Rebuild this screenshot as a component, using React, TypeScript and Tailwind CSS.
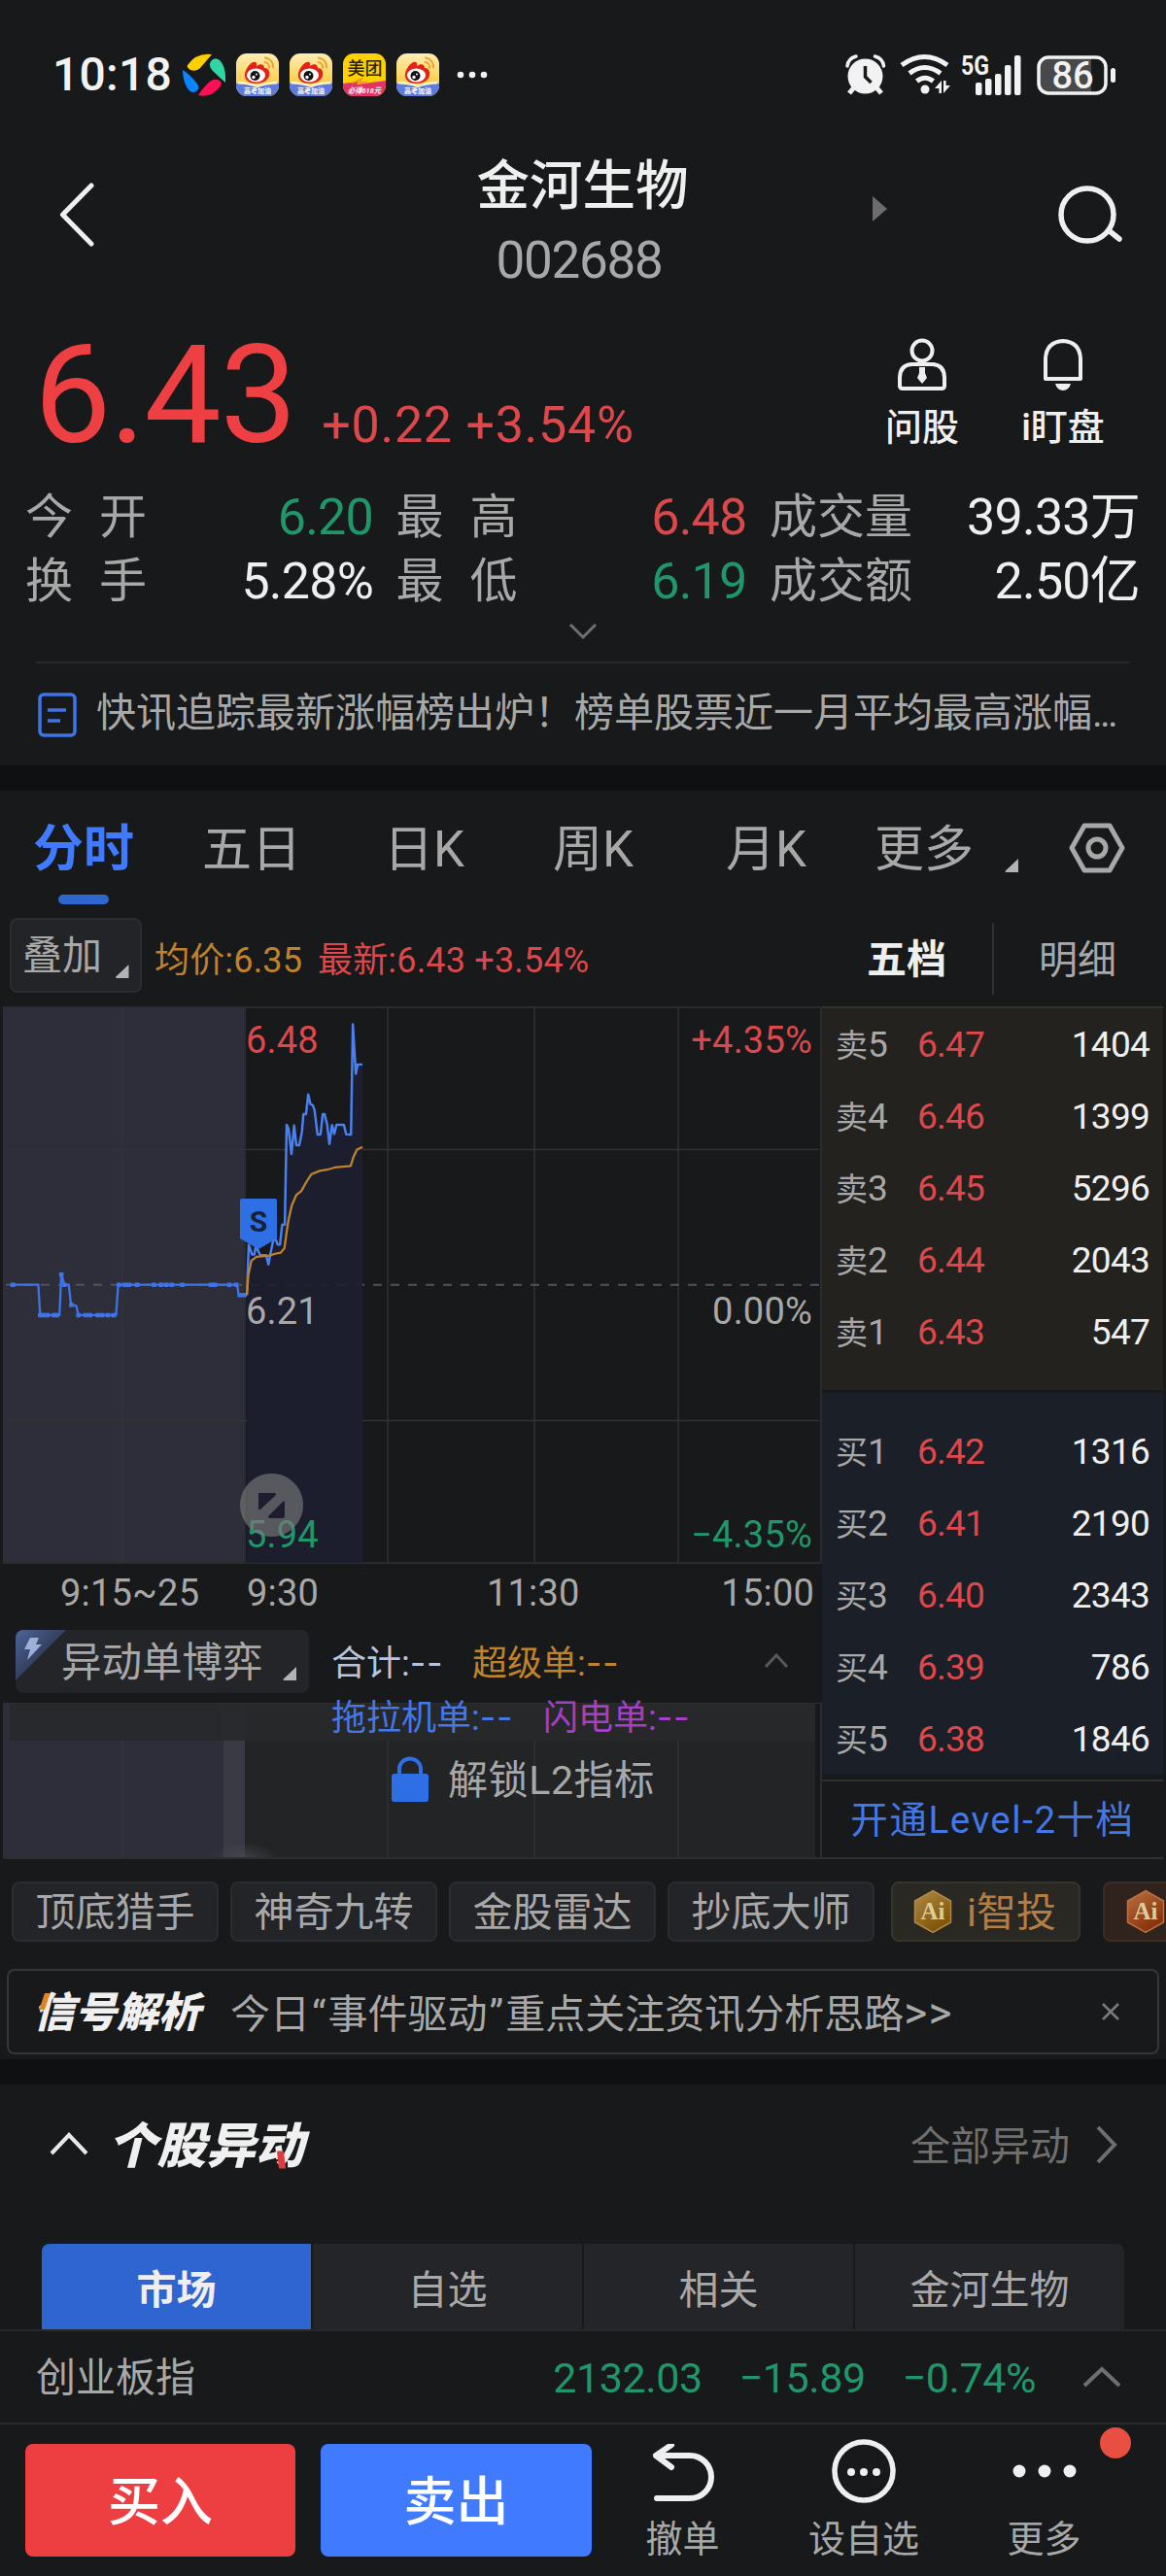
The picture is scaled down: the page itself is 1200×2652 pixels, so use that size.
const CJK = "font-[Roboto,'Noto_Sans_CJK_SC',sans-serif]";

const stats = [
  [
    { label: ["今", "开"], value: "6.20", color: "text-[#20976a]" },
    { label: ["最", "高"], value: "6.48", color: "text-[#d9484b]" },
    { label: ["成", "交", "量"], value: "39.33万", color: "text-[#efefef]" },
  ],
  [
    { label: ["换", "手"], value: "5.28%", color: "text-[#efefef]" },
    { label: ["最", "低"], value: "6.19", color: "text-[#20976a]" },
    { label: ["成", "交", "额"], value: "2.50亿", color: "text-[#efefef]" },
  ],
];

const sells = [
  { name: "卖5", price: "6.47", qty: "1404" },
  { name: "卖4", price: "6.46", qty: "1399" },
  { name: "卖3", price: "6.45", qty: "5296" },
  { name: "卖2", price: "6.44", qty: "2043" },
  { name: "卖1", price: "6.43", qty: "547" },
];

const buys = [
  { name: "买1", price: "6.42", qty: "1316" },
  { name: "买2", price: "6.41", qty: "2190" },
  { name: "买3", price: "6.40", qty: "2343" },
  { name: "买4", price: "6.39", qty: "786" },
  { name: "买5", price: "6.38", qty: "1846" },
];

const tools = ["顶底猎手", "神奇九转", "金股雷达", "抄底大师"];

const auctionLine =
  "27,778 103,778 108,861 160,861 165,748 173,778 185,778 191,833 205,835 211,861 312,861 318,778 638,778 642,806 664,806";
const priceLine =
  "664,806 669,668 678,695 684,695 688,672 700,697 716,697 722,722 728,690 735,655 742,655 747,668 753,668 759,613 766,613 771,340 776,350 784,420 791,342 797,396 805,396 812,360 816,311 823,311 829,257 835,284 841,286 846,300 854,367 862,367 868,311 873,311 880,340 886,393 893,341 899,365 905,340 925,340 931,366 944,367 949,65 957,201 962,175 975,175";
const averageLine =
  "664,806 668,750 676,712 690,701 725,698 740,693 755,690 765,678 770,640 776,600 785,560 797,532 810,522 825,495 838,475 860,466 880,463 900,457 943,453 950,430 960,408 975,401";

/* small marks on the auction line, one per matched tick */
const ticks = [
  [35, 778], [108, 861], [117, 861], [128, 861], [145, 861], [153, 861], [165, 750], [173, 778],
  [192, 833], [211, 861], [230, 861], [242, 861], [263, 861], [275, 861], [290, 861], [305, 861],
  [320, 778], [336, 778], [347, 778], [369, 778], [414, 778], [433, 778], [447, 778], [462, 778],
  [490, 778], [567, 778], [578, 778], [617, 778], [635, 778], [645, 806], [657, 806],
];

const Corner = ({ className }: { className: string }) => (
  <svg viewBox="0 0 14 14" className={className}>
    <path d="M14 0v14H1.5Q0 14 .8 12.6Z" fill="#b3b3b3" />
  </svg>
);

const WeiboIcon = () => (
  <svg viewBox="0 0 44 44" className="h-11 w-11">
    <defs>
      <linearGradient id="wb" x1="0" y1="0" x2="0" y2="1">
        <stop offset="0" stopColor="#fdeeb5" />
        <stop offset="0.65" stopColor="#fdd04f" />
      </linearGradient>
      <clipPath id="wbClip">
        <rect width="44" height="44" rx="11" />
      </clipPath>
    </defs>
    <g clipPath="url(#wbClip)">
      <rect width="44" height="44" fill="url(#wb)" />
      <path d="M0 31q11-2 22 2q11-4 22-2v13H0z" fill="#5d7be0" />
      <path d="M2 29q11 0 20 3.500q9-3.500 20-3.500v2.500q-11 0-20 3.500q-9-3.500-20-3.500z" fill="#fff3d0" />
      <path d="M9 21C10 14 17 7 20 9c2 1 1 3 1 4c4-3 8-2 8 2c4 0 6 3 5 8c-1 5-7 8-14 8S8 27 9 21Z" fill="#e2231a" />
      <ellipse cx="20.500" cy="22.500" rx="9.500" ry="7" fill="#fff" />
      <circle cx="19.500" cy="23" r="5" fill="#111" />
      <circle cx="18" cy="24.500" r="1.700" fill="#fff" />
      <circle cx="21" cy="21.500" r="1" fill="#fff" />
      <path d="M30 4.500a9 9 0 0 1 8 10M29.500 9a5 5 0 0 1 4.500 6" stroke="#eda52f" strokeWidth="2" fill="none" strokeLinecap="round" />
      <text x="22" y="41" fontSize="7" fontWeight="700" fill="#fff" textAnchor="middle">
        高考加油
      </text>
    </g>
  </svg>
);

const MeituanIcon = () => (
  <svg viewBox="0 0 44 44" className="h-11 w-11">
    <clipPath id="mtClip">
      <rect width="44" height="44" rx="11" />
    </clipPath>
    <g clipPath="url(#mtClip)">
      <rect width="44" height="44" fill="#ffd100" />
      <path d="M0 31l16-2l-2 3l30-4v16H0z" fill="#e23468" />
      <path d="M9 31l10-5l-2 4l8-1" stroke="#f08a1c" strokeWidth="1.200" fill="none" />
      <text x="22.500" y="21.500" fontSize="18" fontWeight="500" fill="#2b2300" textAnchor="middle">
        美团
      </text>
      <text x="5" y="41" fontSize="8" fontWeight="700" fontStyle="italic" fill="#fff" textLength="34" lengthAdjust="spacingAndGlyphs">
        必得618元
      </text>
    </g>
  </svg>
);

const StatusBar = () => (
  <div className="flex h-[154px] items-center pl-[54px] pr-[50px] text-[#f2f2f2]">
    <span className="w-[119px] text-[48px] leading-none font-medium tracking-[0.005em]">10:18</span>
    <div className="ml-[15px] flex gap-[11px]">
      <svg viewBox="0 0 44 44" className="h-11 w-11">
        <path d="M5 12Q14-1 30 1Q24 8 18 15Q14 19 8 17Q4 15 5 12Z" fill="#ffd000" />
        <path d="M29 8Q33 3 38 7Q45 14 44 30Q37 24 31 18Q26 13 29 8Z" fill="#2fd6a4" />
        <path d="M0 17Q7 21 14 30Q19 36 14 39Q9 42 5 36Q0 28 0 17Z" fill="#0a84ff" />
        <path d="M16 43Q22 34 28 29Q33 25 38 28Q42 31 37 36Q28 46 16 43Z" fill="#ff0f56" />
      </svg>
      <WeiboIcon />
      <WeiboIcon />
      <MeituanIcon />
      <WeiboIcon />
    </div>
    <svg viewBox="0 0 32 8" className="ml-[18px] h-2 w-8" fill="#f2f2f2">
      <circle cx="4" cy="4" r="3.300" />
      <circle cx="16" cy="4" r="3.300" />
      <circle cx="28" cy="4" r="3.300" />
    </svg>
    <svg viewBox="0 -10 280 64" className="ml-auto h-16 w-[280px]" fill="#f2f2f2">
      <circle cx="20.500" cy="23.500" r="18" />
      <path d="M2 13q1-8 9-10M39.500 13q-1-8-9-10" stroke="#f2f2f2" strokeWidth="3.500" fill="none" strokeLinecap="round" />
      <path d="M9 35l-5 6M32 35l5 6" stroke="#f2f2f2" strokeWidth="5" />
      <path d="M20.500 13v11l6 6" stroke="#17191a" strokeWidth="3.500" fill="none" />
      <path d="M58 12q23.500-17 47 0M66 20.500q15.500-12 32 0M73.500 28.500q8.500-6.500 17 0" stroke="#f2f2f2" strokeWidth="5" fill="none" />
      <circle cx="82" cy="37" r="4.500" />
      <path d="M92 36l7-8v13h-2.600v-5zM108 33l-7 8V28h2.600v5z" />
      <text x="119" y="22" fontSize="28" fontWeight="700" textLength="29" lengthAdjust="spacingAndGlyphs">
        5G
      </text>
      <rect x="134" y="30" width="6.500" height="13" rx="2" />
      <rect x="144" y="26" width="6.500" height="17" rx="2" />
      <rect x="154" y="21" width="6.500" height="22" rx="2" />
      <rect x="164" y="12" width="6.500" height="31" rx="2" />
      <rect x="174" y="2" width="6.500" height="41" rx="2" />
      <path d="M208 5h45v35h-45q-9 0-9-9V14q0-9 9-9z" fill="#48494b" />
      <rect x="199" y="4" width="69" height="37" rx="10" fill="none" stroke="#f2f2f2" strokeWidth="3.500" />
      <rect x="273" y="15" width="5" height="15" rx="2.500" />
      <text x="234" y="36" fontSize="38" fontWeight="500" textAnchor="middle">
        86
      </text>
    </svg>
  </div>
);

const TitleBar = () => (
  <div className="flex h-[156px] items-start justify-between pl-[60px] pr-[44px]">
    <svg viewBox="0 0 38 66" className="mt-[34px] h-[66px] w-[38px]" fill="none" stroke="#efefef" strokeWidth="5" strokeLinecap="round" strokeLinejoin="round">
      <path d="M34 3L4.500 33L34 63" />
    </svg>
    <div className="relative ml-[13px] flex w-[320px] flex-col items-center">
      <h1 className="h-[70px] pt-[3px] text-[54.5px] leading-[69px] font-medium text-[#efefef]">金河生物</h1>
      <span className="mt-[11px] mr-[7px] text-[53px] leading-[66px] tracking-[-0.025em] text-[#a8a8a8]">002688</span>
      <svg viewBox="0 0 15 26" className="absolute top-[48px] left-[458px] h-[26px] w-[15px]">
        <path d="M0 0L15 13L0 26Z" fill="#6c6c6c" />
      </svg>
    </div>
    <svg viewBox="0 0 68 64" className="mt-[35px] h-[64px] w-[68px]" fill="none" stroke="#efefef" strokeWidth="5.500" strokeLinecap="round">
      <circle cx="31" cy="32" r="27" />
      <path d="M54 49L64 57" />
    </svg>
  </div>
);

const PriceRow = () => (
  <div className="flex h-[188px] pl-[35px]">
    <div className="flex w-[840px] items-baseline">
      <span className="text-[141px] leading-[194px] tracking-[-0.01em] text-[#ee3f43]">6.43</span>
      <span className="ml-[27px] text-[52px] leading-none tracking-[0.014em] text-[#dc484b]">+0.22 +3.54%</span>
    </div>
    <div className="mt-[38px] flex h-[112px] w-[148px] flex-col items-center text-[38px] leading-[44px] font-medium text-[#efefef]">
      <svg viewBox="0 0 52 56" className="mb-[14px] h-[56px] w-[52px] shrink-0" fill="none" stroke="#efefef" strokeWidth="4">
        <circle cx="26" cy="13" r="10.500" />
        <path d="M15 27h22q12 1 12 14v8q0 3-3 3H6q-3 0-3-3v-8q0-13 12-14z" />
        <path d="M23 30h6v6l2 5l-5 6l-5-6l2-5z" fill="#efefef" stroke="none" />
      </svg>
      问股
    </div>
    <div className="mt-[38px] flex h-[112px] w-[142px] flex-col items-center text-[38px] leading-[44px] font-medium text-[#efefef]">
      <svg viewBox="0 0 44 56" className="mb-[14px] h-[56px] w-[44px] shrink-0" fill="none" stroke="#efefef" strokeWidth="4">
        <path d="M4 42V21Q5 4 22 3Q39 4 40 21v21z" strokeLinejoin="round" />
        <path d="M14 47h16q-2 7-8 7t-8-7z" fill="#efefef" stroke="none" />
      </svg>
      i盯盘
    </div>
  </div>
);

const Stats = () => (
  <div className="flex h-[183px] flex-col items-center">
    {stats.map((row, i) => (
      <div key={i} className="flex h-[66px] w-full items-center justify-between pt-[3px] pl-[26px] pr-[27px] text-[49px] leading-none text-[#a8a8a8]">
        {row.map((item, j) => (
          <div
            key={j}
            className={
              j === 0
                ? "flex w-[358px] items-center justify-between"
                : j === 1
                  ? "flex w-[361px] items-center justify-between"
                  : "flex w-[381px] items-center justify-between"
            }
          >
            <span className={j === 2 ? "flex" : "flex w-[125px] justify-between"}>
              {item.label.map((c) => (
                <span key={c}>{c}</span>
              ))}
            </span>
            <span className={`${item.color} text-[52px] tracking-[-0.015em]`}>{item.value}</span>
          </div>
        ))}
      </div>
    ))}
    <svg viewBox="0 0 30 18" className="mt-[11px] h-[18px] w-[30px]" fill="none" stroke="#6f6f6f" strokeWidth="3">
      <path d="M2 2L15 15L28 2" />
    </svg>
  </div>
);

const NewsRow = () => (
  <div className="mx-[37px] flex h-[107px] items-center border-t-2 border-[#26282a]">
    <svg viewBox="0 0 40 46" className="ml-[2px] h-[46px] w-[40px] shrink-0" fill="none" stroke="#3f74e8" strokeWidth="3.500">
      <rect x="2" y="2" width="36" height="42" rx="4" />
      <path d="M10 18h19M10 29h13" />
    </svg>
    <span className="mt-[-3px] ml-[20px] text-[41px] leading-none whitespace-nowrap text-[#a8a8a8]">
      快讯追踪最新涨幅榜出炉！榜单股票近一月平均最高涨幅<span className="tracking-[-0.07em]">...</span>
    </span>
  </div>
);

const PeriodTabs = () => (
  <div className="flex h-[126px] items-start pt-[29px] text-[51px] leading-[64px] text-[#a8a8a8]">
    <div className="ml-[33px] flex w-[106px] flex-col items-center">
      <span className="text-[52px] font-bold text-[#3f7aff]">分时</span>
      <i className="mt-[14px] h-[10px] w-[52px] rounded-full bg-[#2f67d1]" />
    </div>
    <span className="ml-[69px] w-[187px]">五日</span>
    <span className="w-[174px]">日K</span>
    <span className="w-[178px]">周K</span>
    <span className="w-[153px]">月K</span>
    <span className="w-[102px]">更多</span>
    <Corner className="mt-[41px] ml-[32px] h-[14px] w-[14px]" />
    <svg viewBox="0 0 58 52" className="mt-[4px] ml-[52px] h-[52px] w-[58px]" fill="none" stroke="#a8a8a8" strokeWidth="5" strokeLinejoin="round">
      <path d="M16 3h26l13 23l-13 23H16L3 26z" />
      <circle cx="29" cy="26" r="9" />
    </svg>
  </div>
);

const ChartToolbar = () => (
  <div className="flex h-[96px] items-start pt-[5px] pl-[10px]">
    <div className="flex h-[77px] w-[136px] items-center rounded-lg border-2 border-[#2b2c2f] bg-[#232427] pt-[2px] pl-[11px] text-[41px] leading-none text-[#a8a8a8]">
      叠加
      <Corner className="mt-[30px] ml-[13px] h-[14px] w-[15px]" />
    </div>
    <div className="ml-[13px] flex h-[84px] w-[700px] items-center pt-[3px] text-[36px] leading-none">
      <span className="w-[168px] tracking-[0.005em] text-[#c0832c]">均价:6.35</span>
      <span className="tracking-[0.005em] text-[#dc484b]">最新:6.43 +3.54%</span>
    </div>
    <div className="flex h-[84px] w-[162px] items-center pt-[3px] pl-[33px] text-[41px] leading-none font-bold text-[#efefef]">五档</div>
    <div className="mt-[5px] flex h-[74px] items-center border-l-2 border-[#2e3033] pt-[3px] pl-[46px] text-[40px] leading-none text-[#a8a8a8]">
      明细
    </div>
  </div>
);

const PriceChart = () => (
  <svg viewBox="0 1036 846 626" className="h-[626px] w-[846px]" fontSize="38" letterSpacing="0.2">
    <rect x="3" y="1037" width="249" height="572" fill="#2e2e3a" />
    <g stroke="#2a2b2d" strokeWidth="2" fill="none">
      <path d="M3 1037H845M3 1609H845M252 1037V1609M399 1037V1609M550 1037V1609M698 1037V1609M845 1037V1609" />
      <path d="M126 1037V1609" stroke="#313139" />
      <path d="M6 1183.500H843M6 1462.500H843" stroke="#313335" strokeWidth="1.500" />
    </g>
    <path d="M6 1322.700H843" stroke="#4e545e" strokeWidth="2" strokeDasharray="9 9" />
    <g transform="translate(0 1030) scale(.38265 .37628)">
      <polygon points={`${priceLine} 975,1538 664,1538`} fill="#1d1e30" fillOpacity="0.9" />
      <polyline points={auctionLine} fill="none" stroke="#3f74e8" strokeWidth="6" />
      {ticks.map(([x, y]) => (
        <rect key={`${x}-${y}`} x={x - 6} y={y - 6} width="12" height="12" fill="#3f74e8" />
      ))}
      <polyline points={priceLine} fill="none" stroke="#4a80f0" strokeWidth="6.500" strokeLinejoin="round" />
      <polyline points={averageLine} fill="none" stroke="#c0832c" strokeWidth="6" strokeLinejoin="round" />
    </g>
    <path d="M247 1236q0-2 2-2h34q2 0 2 2v39l-19 11l-19-11z" fill="#2f6fe6" />
    <text x="266" y="1268" fontSize="30" fontWeight="700" textAnchor="middle" fill="#16223c">
      S
    </text>
    <text x="253" y="1084" fill="#dc484b">6.48</text>
    <text x="253" y="1363" fill="#a8a8a8">6.21</text>
    <text x="253" y="1593" fill="#20976a">5.94</text>
    <g textAnchor="end">
      <text x="836" y="1084" fill="#dc484b">+4.35%</text>
      <text x="836" y="1363" fill="#a8a8a8">0.00%</text>
      <text x="836" y="1593" fill="#20976a">−4.35%</text>
    </g>
    <path
      d="M279.500 1517a32.500 32.500 0 1 0 .1 0zM266 1537h17q2 1 0 3l-15 14q-2 1-2-1zM293 1546v15q0 2-2 2h-14q-2-1 0-3l14-14q2-1 2 0z"
      fill="#7a7a7a"
      fillOpacity="0.65"
      fillRule="evenodd"
    />
    <g fill="#a8a8a8">
      <text x="62" y="1653">9:15~25</text>
      <text x="254" y="1653">9:30</text>
      <text x="501" y="1653">11:30</text>
      <text x="838" y="1653" textAnchor="end">15:00</text>
    </g>
  </svg>
);

const Dashes = () => <span className="font-[Inter,sans-serif] tracking-[0.02em]">--</span>;

const IndicatorHeader = () => (
  <div className="flex h-[91px] items-start pt-[16px] pl-[16px]">
    <div className="relative flex h-[65px] w-[302px] items-center overflow-hidden rounded-lg bg-[#242528] pt-[3px] pl-[47px] text-[41.5px] leading-none text-[#a8a8a8]">
      <svg viewBox="0 0 52 52" className="absolute top-0 left-0 h-[52px] w-[52px]">
        <defs>
          <linearGradient id="fold" x1="0" y1="0" x2=".5" y2=".5">
            <stop offset="0" stopColor="#4f639a" />
            <stop offset="1" stopColor="#33415f" />
          </linearGradient>
        </defs>
        <path d="M0 0h52L0 52z" fill="url(#fold)" />
        <path d="M15 8h9l-3 7h6L12 31l3-11H9z" fill="#9fb0d8" />
      </svg>
      异动单博弈
      <Corner className="mt-[21px] ml-[20px] h-[14px] w-[14px]" />
    </div>
    <div className="ml-[23px] flex h-[66px] items-center pt-[3px] text-[36px] leading-none">
      <span className="w-[145px] text-[#b9c3dd]">合计:<Dashes /></span>
      <span className="w-[300px] text-[#c0832c]">超级单:<Dashes /></span>
    </div>
    <svg viewBox="0 0 26 16" className="mt-[24px] h-[16px] w-[26px]" fill="none" stroke="#55585e" strokeWidth="3">
      <path d="M2 14L13 2L24 14" />
    </svg>
  </div>
);

const LockedIndicator = () => (
  <div className="relative flow-root h-[162px] w-[846px]">
    <svg viewBox="0 1753 846 162" className="absolute inset-0 h-full w-full">
      <defs>
        <radialGradient id="glow">
          <stop offset="0" stopColor="#4a4954" />
          <stop offset="1" stopColor="#4a4954" stopOpacity="0" />
        </radialGradient>
        <clipPath id="glowClip">
          <rect x="3" y="1753" width="840" height="160" />
        </clipPath>
      </defs>
      <rect x="3" y="1753" width="836" height="160" fill="#232426" />
      <rect x="3" y="1753" width="249" height="160" fill="#2e2e3a" />
      <rect x="230" y="1754" width="22" height="159" fill="#3a3a44" />
      <ellipse cx="252" cy="1913" rx="34" ry="16" fill="url(#glow)" fillOpacity="0.7" clipPath="url(#glowClip)" />
      <rect x="10" y="1754" width="829" height="38" fill="#27292b" fillOpacity="0.9" />
      <path d="M3 1753H845M3 1913H846M399 1792V1913M550 1792V1913M698 1792V1913M845 1753V1913" stroke="#2c2d2f" strokeWidth="2" />
      <path d="M126 1792V1913" stroke="#333339" strokeWidth="2" />
    </svg>
    <div className="relative -mt-[5px] flex h-[40px] items-center pl-[341px] text-[36px] leading-none">
      <span className="w-[218px] text-[#4478e6]">拖拉机单:<Dashes /></span>
      <span className="text-[#a43fc8]">闪电单:<Dashes /></span>
    </div>
    <div className="relative mt-[18px] flex h-[52px] items-center pl-[403px] text-[41px] leading-none tracking-[0.015em] text-[#a8a8a8]">
      <svg viewBox="0 0 38 48" className="mr-[20px] h-[48px] w-[38px]">
        <rect y="18" width="38" height="29" rx="3" fill="#2f6fe6" />
        <path d="M8 20V13a11 10.500 0 0 1 22 0v7" fill="none" stroke="#2f6fe6" strokeWidth="4" />
      </svg>
      <span className="pt-[3px]">解锁L2指标</span>
    </div>
  </div>
);

const Level = ({ name, price, qty }: { name: string; price: string; qty: string }) => (
  <div className="flex h-[74px] items-center pr-[14px] pl-[14px] text-[37px] leading-none">
    <span className="w-[84px] text-[#a8a8a8]">
      <span className="text-[33px]">{name[0]}</span>
      {name[1]}
    </span>
    <span className="tracking-[-0.02em] text-[#dc484b]">{price}</span>
    <span className="ml-auto tracking-[-0.02em] text-[#efefef]">{qty}</span>
  </div>
);

const OrderBook = () => (
  <div className="w-[351px]">
    <div className="h-[395px] border-t-2 border-[#313130] bg-[#23221f]">
      {sells.map((l) => (
        <Level key={l.name} {...l} />
      ))}
    </div>
    <div className="mt-[3px] h-[393px] bg-[#1b1f27] pt-[23px]">
      {buys.map((l) => (
        <Level key={l.name} {...l} />
      ))}
    </div>
    <div className="mt-[5px] flex h-[82px] items-center justify-center border-y-2 border-[#2e3033] pt-[3px] text-[38.5px] leading-none tracking-[0.04em] text-[#4478e6]">
      开通Level-2十档
    </div>
  </div>
);

const AiBadge = ({ from, to, edge }: { from: string; to: string; edge: string }) => (
  <svg viewBox="0 0 40 46" className="h-[46px] w-[40px] shrink-0">
    <defs>
      <linearGradient id={`ai${edge}`} x1="0" y1="0" x2="0.600" y2="1">
        <stop offset="0" stopColor={from} />
        <stop offset="1" stopColor={to} />
      </linearGradient>
    </defs>
    <path d="M20 1.500L38.500 12v22L20 44.500L1.500 34V12z" fill={`url(#ai${edge})`} stroke={from} strokeWidth="1.500" />
    <text x="20" y="31" fontSize="25" fontWeight="700" fontFamily="Liberation Serif, serif" textAnchor="middle" fill="#d9cf9a">
      Ai
    </text>
  </svg>
);

const Tools = () => (
  <div className="flex h-[112px] overflow-hidden pt-[22px] pl-[12px] text-[41px] leading-none text-[#a8a8a8]">
    {tools.map((t) => (
      <div key={t} className="mr-[12px] flex h-[62px] w-[213px] shrink-0 items-center justify-center rounded-lg border-2 border-[#2b2c2f] bg-[#232427] pt-[3px]">
        {t}
      </div>
    ))}
    <div className="ml-[5px] flex h-[62px] w-[195px] shrink-0 items-center rounded-lg border-2 border-[#37342c] bg-[#2a2822] pl-[21px] text-[#b07f45]">
      <AiBadge from="#b08a45" to="#7d5205" edge="gold" />
      <span className="ml-[15px] pt-[3px]">i智投</span>
    </div>
    <div className="ml-[23px] flex h-[62px] w-[195px] shrink-0 items-center rounded-lg border-2 border-[#3c2c25] bg-[#30221d] pl-[22px]">
      <AiBadge from="#bb7142" to="#852f08" edge="copper" />
    </div>
  </div>
);

const Banner = () => (
  <div className="mx-[7px] flex h-[88px] items-center rounded-lg border-2 border-[#343638] pl-[25px]">
    <span className="relative w-[199px] pt-[3px] text-[43px] leading-none font-black text-[#f0f0f0] italic">
      信号解析
      <svg viewBox="0 0 12 18" className="absolute top-[4px] left-[6px] h-[17px] w-[12px]">
        <path d="M6 0h6L6 18H0z" fill="#e08325" />
      </svg>
    </span>
    <span className="ml-[4px] pt-[2px] text-[41px] leading-none whitespace-nowrap text-[#a8a8a8]">
      今日<span className="px-[2px]">“</span>事件驱动<span className="px-[2px]">”</span>重点关注资讯分析思路
      <span className="text-[46px] leading-none tracking-[0.03em]">&gt;&gt;</span>
    </span>
    <svg viewBox="0 0 18 18" className="mr-[39px] ml-auto h-[18px] w-[18px]" stroke="#7a7a7a" strokeWidth="2.500">
      <path d="M1 1L17 17M17 1L1 17" />
    </svg>
  </div>
);

const Movements = () => (
  <>
    <div className="flex h-[164px] items-start pt-[32px] pl-[51px]">
      <svg viewBox="0 0 40 24" className="mt-[17px] h-[24px] w-[40px]" fill="none" stroke="#e8e8e8" strokeWidth="4">
        <path d="M2 22L20 3L38 22" />
      </svg>
      <h2 className="relative ml-[20px] w-[220px] text-[50.5px] leading-[64px] font-black text-[#f0f0f0] italic">
        个股异动
        <svg viewBox="0 0 10 18" className="absolute top-[36px] left-[173px] h-[19px] w-[10px]">
          <path d="M1 0h7l2 18H3z" fill="#e03a3d" />
        </svg>
      </h2>
      <span className="ml-auto text-[41px] leading-[64px] text-[#6f6f6f]">全部异动</span>
      <svg viewBox="0 0 22 40" className="mt-[10px] mr-[50px] ml-[27px] h-[40px] w-[22px]" fill="none" stroke="#6f6f6f" strokeWidth="4">
        <path d="M2 2L19 20L2 38" />
      </svg>
    </div>
    <div className="mx-[43px] flex h-[88px] gap-[2px] overflow-hidden rounded-t-lg text-[41px] leading-none text-[#a8a8a8]">
      <div className="flex flex-1 items-center justify-center bg-[#2f65d0] pt-2 font-bold text-[#efefef]">市场</div>
      <div className="flex flex-1 items-center justify-center bg-[#242529] pt-2">自选</div>
      <div className="flex flex-1 items-center justify-center bg-[#242529] pt-2">相关</div>
      <div className="flex flex-1 items-center justify-center bg-[#242529] pt-2">金河生物</div>
    </div>
  </>
);

const IndexRow = () => (
  <div className="flex h-[98px] items-center border-y-2 border-[#26282a] pl-[37px] text-[43px] leading-none text-[#20976a]">
    <span className="pt-[3px] text-[41px] text-[#a8a8a8]">创业板指</span>
    <span className="ml-auto pt-[2px] tracking-[-0.01em]">2132.03</span>
    <span className="ml-[38px] pt-[2px] tracking-[-0.01em]">−15.89</span>
    <span className="ml-[38px] pt-[2px] tracking-[-0.01em]">−0.74%</span>
    <svg viewBox="0 0 40 22" className="mr-[46px] ml-[48px] h-[22px] w-[40px]" fill="none" stroke="#6f6f6f" strokeWidth="4">
      <path d="M2 20L20 3L38 20" />
    </svg>
  </div>
);

const BottomBar = () => (
  <div className="flex h-[156px] pt-[20px] pl-[26px] text-[38px] leading-none text-[#a8a8a8]">
    <button className="mr-[26px] h-[116px] w-[278px] rounded-lg bg-[#ed3e42] pt-[6px] text-[54px] leading-none font-medium text-white">买入</button>
    <button className="h-[116px] w-[279px] rounded-lg bg-[#3f7aff] pt-[6px] text-[54px] leading-none font-medium text-white">卖出</button>
    <div className="flex w-[187px] flex-col items-center">
      <svg viewBox="0 0 64 62" className="mb-[17px] h-[62px] w-[64px]" fill="none" stroke="#efefef" strokeWidth="6" strokeLinecap="round" strokeLinejoin="round">
        <path d="M5 12h34a22 22 0 0 1 0 44H5" />
        <path d="M20 1L4 12L20 24" />
      </svg>
      撤单
    </div>
    <div className="flex w-[186px] flex-col items-center">
      <svg viewBox="0 0 66 66" className="-mt-[5px] mb-[18px] h-[66px] w-[66px]" fill="#efefef">
        <circle cx="33" cy="33" r="30" fill="none" stroke="#efefef" strokeWidth="5.500" />
        <circle cx="20" cy="34" r="4" />
        <circle cx="33" cy="34" r="4" />
        <circle cx="46" cy="34" r="4" />
      </svg>
      设自选
    </div>
    <div className="relative flex w-[185px] flex-col items-center">
      <svg viewBox="0 0 66 14" className="mt-[21px] mb-[44px] h-[14px] w-[66px]" fill="#efefef">
        <circle cx="7" cy="7" r="6.500" />
        <circle cx="33" cy="7" r="6.500" />
        <circle cx="59" cy="7" r="6.500" />
      </svg>
      更多
      <i className="absolute -top-[17px] left-[150px] h-8 w-8 rounded-full bg-[#e94f40]" />
    </div>
  </div>
);

const App = () => {
  return (
    <div className={`h-[2652px] w-[1200px] overflow-hidden bg-[#17191a] ${CJK}`} lang="zh-CN">
      <StatusBar />
      <TitleBar />
      <PriceRow />
      <Stats />
      <NewsRow />
      <div className="h-[26px] bg-[#0f1012]" />
      <PeriodTabs />
      <ChartToolbar />
      <div className="flex h-[879px]">
        <div className="w-[846px]">
          <PriceChart />
          <IndicatorHeader />
          <LockedIndicator />
        </div>
        <OrderBook />
      </div>
      <Tools />
      <Banner />
      <div className="mt-[5px] h-[26px] bg-[#0f1012]" />
      <Movements />
      <IndexRow />
      <BottomBar />
    </div>
  );
};

export default App;
